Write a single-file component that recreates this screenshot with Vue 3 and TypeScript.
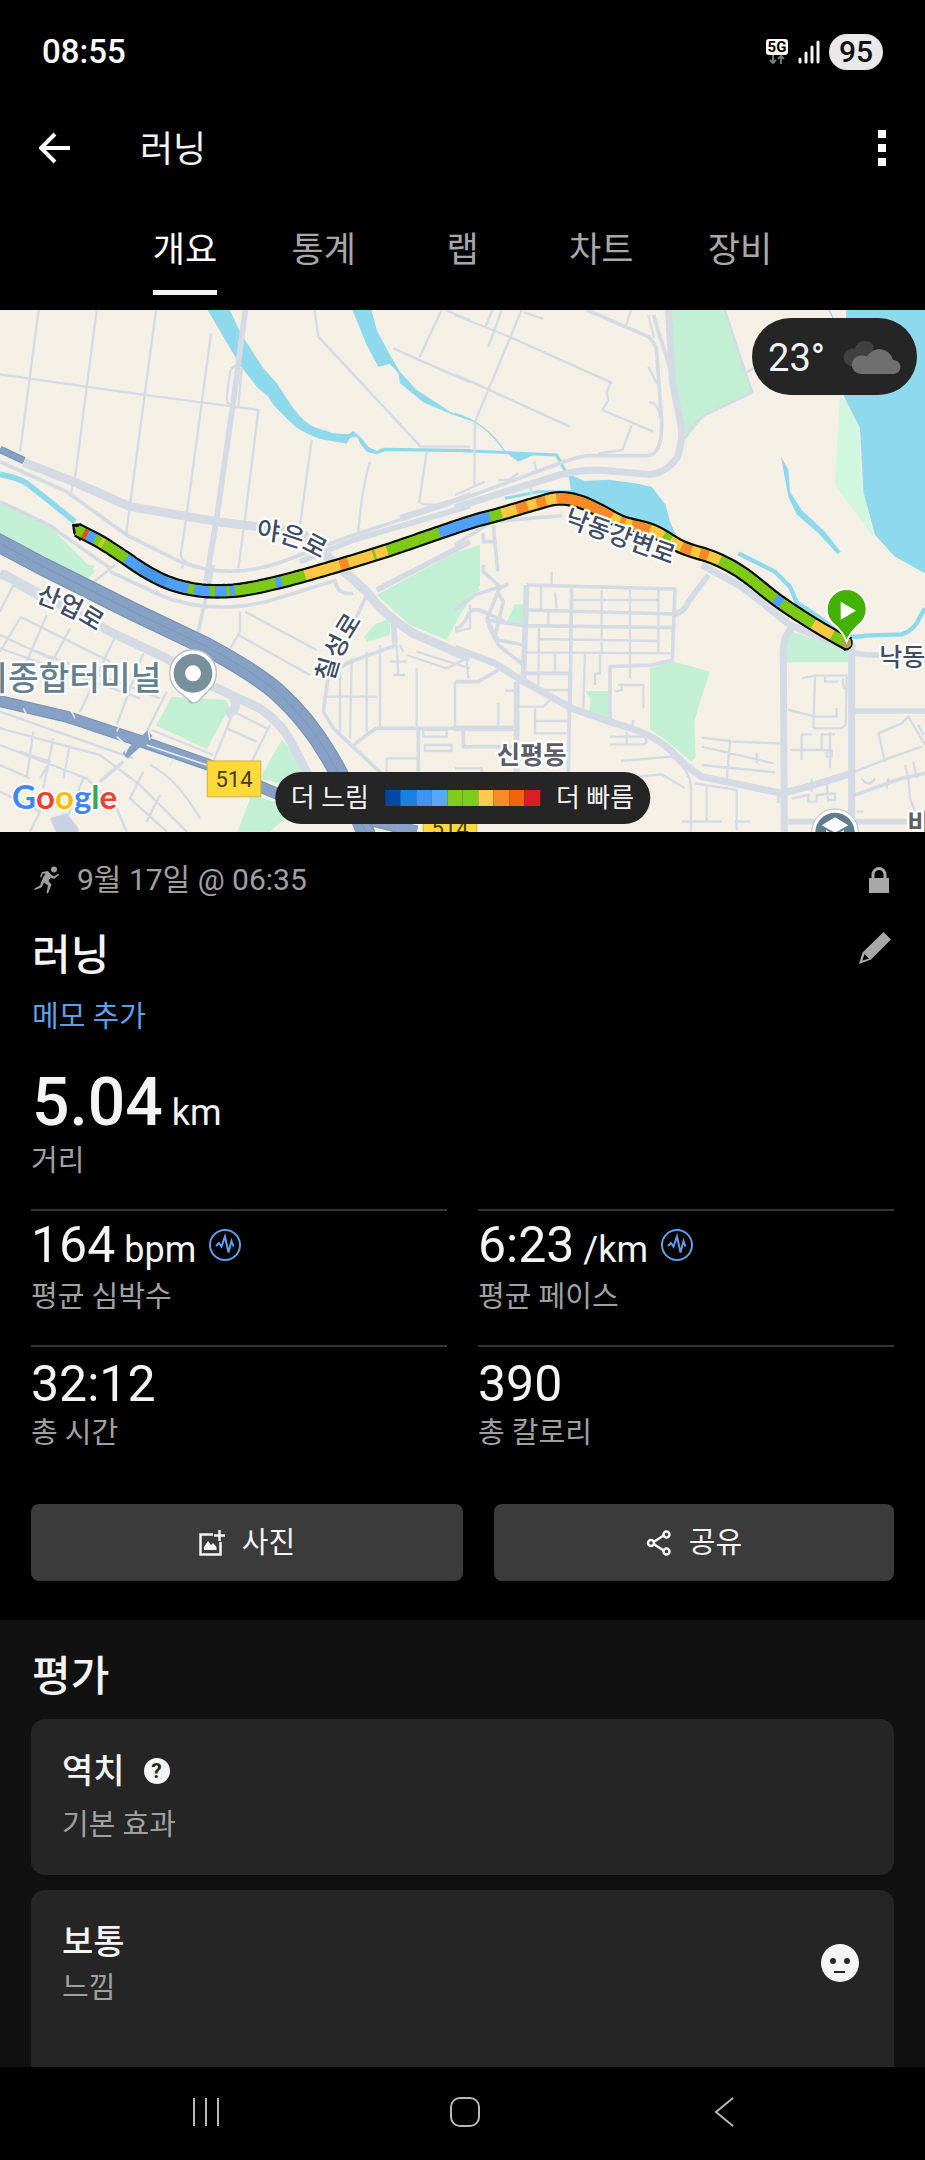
<script setup lang="ts">
import { ref } from 'vue'

interface Stat {
  value: string
  unit?: string
  label: string
  graph: boolean
}

const tabs: string[] = ['개요', '통계', '랩', '차트', '장비']
const activeTab = ref<string>('개요')

const stats: Stat[] = [
  { value: '164', unit: 'bpm', label: '평균 심박수', graph: true },
  { value: '6:23', unit: '/km', label: '평균 페이스', graph: true },
  { value: '32:12', label: '총 시간', graph: false },
  { value: '390', label: '총 칼로리', graph: false },
]

const paceScale: string[] = [
  '#0047a3', '#1d7fe0', '#3f93f2', '#57a6ff', '#80cb1c',
  '#80cb1c', '#ffcb4d', '#fc8a28', '#f0650c', '#d91f25',
]

/* Route: points in map units, always running west to east. */
const points: [number, number][] = [
  [232, 660], [300, 695], [370, 740], [430, 780], [490, 812], [550, 832], [620, 843],
  [720, 840], [850, 813], [1000, 771], [1160, 722], [1410, 637], [1505, 611], [1600, 583],
  [1675, 565], [1740, 575], [1800, 602], [1865, 636], [1960, 663], [2045, 711], [2145, 745],
  [2225, 788], [2335, 873], [2445, 945], [2545, 1002],
]

function yAt(x: number): number {
  let i = 0
  while (i < points.length - 2 && x > points[i + 1][0]) i++
  const [x1, y1] = points[i]
  const [x2, y2] = points[i + 1]
  const before = points[Math.max(i - 1, 0)]
  const after = points[Math.min(i + 2, points.length - 1)]
  const m1 = (y2 - before[1]) / (x2 - before[0])
  const m2 = (after[1] - y1) / (after[0] - x1)
  const w = x2 - x1
  const t = (x - x1) / w
  const t2 = t * t
  const t3 = t2 * t
  return (2 * t3 - 3 * t2 + 1) * y1 + (t3 - 2 * t2 + t) * w * m1
    + (3 * t2 - 2 * t3) * y2 + (t3 - t2) * w * m2
}

function slice(from: number, to: number): string {
  const steps = Math.max(1, Math.ceil((to - from) / 12))
  const out: string[] = []
  for (let i = 0; i <= steps; i++) {
    const x = from + ((to - from) * i) / steps
    out.push(`${x.toFixed(1)},${yAt(x).toFixed(1)}`)
  }
  return out.join(' ')
}

const G = '#7cc916'
const B = '#4f9ffc'
const Y = '#fdc645'
const O = '#fa8a29'
const R = '#e05518'

/* Each entry: where the colour ends, and the colour. */
const pace: [number, string][] = [
  [250, G], [262, R], [286, B], [300, G], [311, '#c9cc30'], [378, G], [420, B], [500, '#4596ee'],
  [565, B], [582, G], [630, B], [645, G], [680, B], [690, G], [705, B], [828, G], [846, B],
  [915, G], [1020, Y], [1045, O], [1120, Y], [1127, G], [1162, Y], [1318, G], [1470, B],
  [1505, G], [1550, Y], [1583, O], [1610, Y], [1638, O], [1670, Y], [1835, O], [1860, Y],
  [1875, O], [1895, Y], [1950, O], [1990, Y], [2010, G], [2045, Y], [2075, O], [2100, Y],
  [2125, O], [2160, Y], [2325, G], [2345, B], [2440, G], [2497, Y], [2530, G], [2545, '#b9a05a'],
]
const segments = pace.map(([end, color], i) => ({
  color,
  line: slice(i === 0 ? 232 : pace[i - 1][0], end),
}))
const outline = slice(232, 2545)
</script>

<template>
  <div class="screen">
    <header>
      <div class="status">
        <time>08:55</time>
        <div class="status-icons">
          <svg class="net" viewBox="0 0 24 28" aria-hidden="true">
            <rect x="1" y="1" width="22" height="16" rx="3" fill="#fff" />
            <text x="12" y="14" text-anchor="middle" class="net-text">5G</text>
            <path d="M8 17v8M5 22l3 3 3-3M16 26v-8M13 21l3-3 3 3" fill="none" stroke="#777" stroke-width="2" />
          </svg>
          <svg class="signal" viewBox="0 0 22 24" aria-hidden="true">
            <path d="M2 19v3M8 13v9M14 7v15M20 2v20" fill="none" stroke="#f4f4f4" stroke-width="3" stroke-linecap="round" />
          </svg>
          <span class="battery">95</span>
        </div>
      </div>
      <div class="appbar">
        <button type="button" class="icon-btn" aria-label="뒤로">
          <svg width="32" height="32" viewBox="0 0 32 32"><path d="M31 16H3M16 2L2 16l14 14" fill="none" stroke="#fff" stroke-width="4" /></svg>
        </button>
        <h1>러닝</h1>
        <button type="button" class="icon-btn more" aria-label="더보기">
          <svg width="8" height="36" viewBox="0 0 8 36"><path d="M0 0h8v8H0zM0 14h8v8H0zM0 28h8v8H0z" fill="#fff" /></svg>
        </button>
      </div>
      <nav class="tabs">
        <button
          v-for="tab in tabs"
          :key="tab"
          type="button"
          :class="{ active: tab === activeTab }"
          @click="activeTab = tab"
        ><span>{{ tab }}</span></button>
      </nav>
    </header>

    <section class="map">
      <svg class="map-art" viewBox="0 0 2775 1566" preserveAspectRatio="xMidYMid slice" role="img" aria-label="러닝 경로 지도">
        <defs>
          <path id="label-yaeun" d="M768 686Q880 690 985 762" />
          <path id="label-saneop" d="M105 875Q200 905 305 975" />
          <path id="label-chilseong" d="M1000 1118Q1012 1040 1092 922" />
        </defs>

        <g class="park">
          <path d="M0 580L150 650L285 785L240 825L0 690z" />
          <path transform="translate(0 765)" d="M140 0L285 0L262 40zM1130 90L1370 -40L1440 -60V60L1380 150L1340 225L1230 180zM1092 215L1125 178L1170 160V210L1100 232zM515 395L680 405L687 430L620 552L468 482zM780 640L845 525L935 625V680zM712 800L755 690L890 730L810 800z" />
          <path transform="translate(1365 -15)" d="M650 0H805L893 262L750 330L690 405L665 310z" />
          <path transform="translate(1365 765)" d="M0 0H60L55 45L75 75L30 105L0 175zM585 310L650 288L765 320L738 400L718 470L722 575L710 590L650 540L585 492zM390 378H460V460L403 440L407 400zM995 195L1180 255V292H995zM150 180L180 118H212V178z" />
          <path class="meadow" transform="translate(1365 -15)" d="M1155 270L1180 300L1212 370L1218 520L1255 695L1140 540z" />
        </g>

        <g class="water">
          <path transform="translate(0 -15)" d="M620 10H688Q715 75 735 105L790 190L830 235L880 310Q915 355 940 365L1000 385L1045 388L1060 378L1085 400L1105 425L1130 438L1150 428L1410 432V442L1155 438L1130 448L1100 440L1080 415L1072 395L1050 398L1040 416L960 402Q900 380 870 350L820 300L805 275L770 245L720 180zM1055 10H1113L1130 75L1170 150L1200 200L1250 255L1320 300L1350 320L1410 342V347L1345 324L1270 292L1200 235L1195 205L1170 177L1135 185L1100 120z" />
          <path transform="translate(1365 -15)" d="M1175 0H1410V805L1320 755L1260 690L1225 560L1215 370L1160 260zM978 455L1000 495L1005 560L1040 615L1110 680L1157 740L1148 748L1090 685L1025 628L1000 575L988 510zM340 508L390 528L460 524L540 535L590 545L632 600L645 650L665 695L740 730L500 640L420 590L350 570zM150 440L190 470L240 448z" />
          <g class="stream">
            <path d="M0 493Q60 505 80 520T225 635" stroke-width="17" />
            <path transform="translate(1365 -15)" d="M0 436L305 450L340 515M150 580L250 560L350 560" stroke-width="9" />
            <path transform="translate(1365 -15)" d="M0 325Q90 350 150 440M1120 10L1145 60" stroke-width="4" />
            <path transform="translate(1365 765)" d="M850 -35L960 20L1005 65L1025 112L1100 162L1150 202Q1190 222 1230 212L1340 208Q1380 195 1395 155L1410 130" stroke-width="13" />
          </g>
        </g>

        <g class="roads">
          <g transform="translate(0 -15)">
            <path class="r8" d="M118 0L60 440M292 0L225 520M470 0L390 600L378 690M633 85L560 630L542 750Q545 775 600 785M0 208L400 265L775 315L735 640L715 790M700 300Q680 300 680 280L690 200Q695 185 710 182M725 190L715 305M935 405L900 660M1110 470Q1085 550 1075 680M1280 440L1258 590Q1260 602 1340 598M942 0L955 95L1262 425H1410M1325 15L1258 158M1180 130L1410 232M1335 15L1410 45M220 530L210 575" />
            <path class="r12" d="M0 470L200 560L380 690L540 770Q690 830 860 765L1060 690L1340 600L1410 565M1200 635L1410 570M0 590L150 662L330 790" />
            <path class="r18" d="M738 0L700 290L650 640L618 830M900 770L1060 705L1410 602" />
            <path class="r26" d="M72 472L220 530L390 605L650 650L780 666L900 680L1000 770L1100 860" />
          </g>
          <g transform="translate(1365 -15)">
            <path class="r8" d="M200 15L60 350L58 540M0 30L150 90L468 232L455 262L460 285L442 315L595 380M0 208L345 365M530 360L502 435L430 445M112 15L92 65M140 15L100 125M208 22L265 42M528 15L512 65M580 30L598 100M580 185L605 235M582 292Q610 290 615 340M805 0L872 205L893 262L750 330Q710 360 690 400M238 470L243 495M225 530L230 570M0 570L90 530M130 525H160L190 505M1000 130L870 205" />
            <path class="r12" d="M395 15L580 95Q605 120 605 140L620 350Q622 452 575 452H400Q370 455 300 480L0 590M595 30L645 190M0 720L110 650L320 632M85 685V710H120M115 660L128 800" />
            <path class="r22" d="M640 0L652 230L672 330Q690 400 665 460Q625 510 580 508L430 495Q350 495 280 520L0 608" />
          </g>
          <g transform="translate(0 765)">
            <path class="r8" d="M0 210L160 285M0 140L40 60M0 250L420 400M60 160L0 260M140 150L80 290M210 190L130 340M345 215L240 440M430 265L350 480M40 60L130 110M60 155L330 290M60 240L480 400M500 380L440 500M270 60L345 0M550 0L545 10M720 140V200L680 270M735 140L950 255M715 210L930 330M700 440L800 490M680 490L770 530M810 480L740 620M700 440L640 590M455 495L640 570M445 520L620 590M0 490L300 570L420 660L560 800M0 440L400 580M0 540L260 640L350 730L380 800M60 560L150 590L120 640M100 500L80 640M160 520L130 670M210 540L190 640M0 600L90 640M0 680L120 740L90 800M250 640L200 760M430 620L390 700L500 800M450 600Q530 640 600 760M480 690L440 770M1140 240V490M1100 260V500M1055 280L1050 520M1020 300V500M980 395H1130M1250 310V490M1365 350V490M1190 240L1195 330M1170 290H1220M1180 330H1215M1220 270L1340 310L1400 280M1410 310L1250 260M1270 495H1340V515H1270zM1275 540H1355V558H1275zM1160 620V580H1260M1200 240L1210 260M1365 200L1410 190V120" />
            <path class="r12" d="M330 20L480 90Q620 150 800 110L1010 45M640 0L590 220M1190 240L1050 290L985 330L970 440L1000 490L1160 640M1130 490H1410M1060 540L1130 488M1255 490V620M1005 45Q1010 90 1060 85M300 650L370 590M1100 90L1040 220M860 740H920" />
            <path class="r18" d="M1180 160L1185 235M1130 75L1410 -70M10 20L120 85" />
            <path class="r26" d="M0 25L130 90L340 205L500 280L640 365L780 430Q850 480 875 535L930 640M1010 0L1100 80Q1150 150 1240 205L1410 280M700 400Q720 430 680 450" />
            <path class="hub" d="M150 760L200 745L235 790V805H170z" />
          </g>
          <g transform="translate(1365 765)">
            <path class="r8" d="M258 60V135M300 82L305 130M352 105H610M255 222L610 228M252 185L250 368M300 265V325M390 265L385 430M435 265V325H420V360M440 75V265M525 75V340M610 70V265M280 140V178M205 262L655 265M240 375H340M190 425H265L290 400M240 430V505H340M240 468H340M130 415V480M150 377H175M490 360H565V430M500 355V375L480 380M465 515H570L575 530Q570 540 550 538H465M535 465L530 490M515 500V535M498 588L650 575Q700 610 708 660V800M550 635L620 628L690 670M680 770H800M840 770H885M720 655L845 675V795M755 660V770M740 518L825 528L815 645M740 545L955 595M740 600L960 622M830 530L975 535M905 565V595M1040 340L1080 332H1175L1172 480L1160 490H1075M1080 335L1075 490M1110 335V350H1150M1165 340Q1160 370 1178 372M1000 435L1080 455H1145V430M1005 555H1130V575H1115V555M1040 585V508H1070M1100 555V508H1140M1125 500V610M1010 700L1060 690V710H1085V690L1140 685V705H1120M1070 640V680M1115 655L1120 710M1270 505L1340 475L1360 455L1410 540M1270 505L1290 590M1200 620L1300 580L1400 545M1220 640Q1240 670 1260 640M1300 640L1295 670M1350 600L1360 640M1375 590L1385 640M1360 640L1365 700L1380 740M1390 480L1405 510M1205 740H1225M970 690V715M290 20V60M0 610H80V625M35 290L40 340" />
            <path class="r12" d="M215 60L660 72L652 285L590 300L465 305V470M350 70L345 430M215 135L658 147M95 165L205 182L658 188M205 325H345L340 640M0 350H70L130 315M95 165L135 65L85 20V0M135 70L160 55M0 190Q20 190 40 150Q50 120 95 145L150 170M95 165L130 225L205 240M100 180L130 240L205 300M130 85L145 110L120 215M0 135L60 90L135 65M25 490V545H180M1200 690L1340 640L1410 625" />
            <path class="r18" d="M0 490H175M215 60L205 350M185 350V620M655 150Q690 140 700 110L760 30M1200 265L1240 270H1410M1200 438H1410M1000 770H1410" />
            <path class="r22" d="M0 250L120 295L190 340L350 430L480 475Q610 510 660 570Q700 610 740 635L980 685L1060 665L1190 625M1010 190Q985 210 985 260L988 800M1190 235V760M740 0L860 65L1005 180L1190 255" />
          </g>
        </g>

        <g class="highway">
          <path class="edge" d="M0 418L72 452" stroke-width="22" />
          <path d="M0 418L72 452" stroke-width="16" />
          <g transform="translate(0 765)">
            <path class="edge" d="M-20 404L200 455L420 528L620 597L840 690L930 720L1250 800" stroke-width="36" />
            <path d="M-20 404L200 455L420 528L620 597L840 690L930 720L1250 800" stroke-width="30" />
            <path d="M375 572L450 505" stroke-width="22" />
            <path class="lane" d="M350 515L385 545L375 565M440 540L620 600M445 500L450 525M70 430L80 450M215 440L225 460M165 485L175 470M350 500L360 480M510 605L520 580" />
            <path class="edge" d="M-20 -75L130 5L400 140L620 245Q760 320 830 380Q920 460 985 570Q1040 660 1100 810" stroke-width="56" />
            <path d="M-20 -75L130 5L400 140L620 245Q760 320 830 380Q920 460 985 570Q1040 660 1100 810" stroke-width="50" />
            <path class="seam" d="M-20 -75L130 5L400 140L620 245Q760 320 830 380Q920 460 985 570Q1040 660 1100 810" />
          </g>
        </g>

        <g class="route">
          <polyline :points="outline" stroke="#0b0d0b" stroke-width="44" />
          <path d="M242 642L218 644L222 670L240 690zM2535 976A22 22 0 1 1 2534 1020z" fill="#0b0d0b" stroke="#0b0d0b" stroke-width="4" stroke-linejoin="round" />
          <polyline :points="outline" :stroke="G" stroke-width="30" />
          <path d="M240 650L224 651L227 666L240 678z" :fill="G" />
          <path d="M2540 985A15 15 0 1 1 2538 1015z" fill="#b9a05a" />
          <polyline v-for="(s, i) in segments" :key="i" :points="s.line" :stroke="s.color" stroke-width="30" />
        </g>

        <g class="labels">
          <text class="road"><textPath href="#label-yaeun">야은로</textPath></text>
          <text class="road"><textPath href="#label-saneop">산업로</textPath></text>
          <text class="road"><textPath href="#label-chilseong">칠성로</textPath></text>
          <text class="road" transform="translate(1690 645) rotate(20)">낙동강변로</text>
          <text class="road" x="2638" y="1067">낙동강변로</text>
          <text class="place" x="1490" y="1362">신평동</text>
          <text class="place" x="2722" y="1565">비산동</text>
          <text class="poi" x="484" y="1141" text-anchor="end">구미종합터미널</text>
        </g>

        <g class="shield">
          <rect x="622" y="1353" width="160" height="107" />
          <text x="702" y="1430" text-anchor="middle">514</text>
          <rect x="1270" y="1500" width="160" height="107" />
          <text x="1350" y="1577" text-anchor="middle">514</text>
        </g>

        <g>
          <path d="M579 1180L533 1142A70 70 0 1 1 625 1142L594 1174Q579 1186 564 1174z" fill="#fff" stroke="#b6bec4" stroke-width="4" />
          <circle cx="579" cy="1090" r="58" fill="#78909c" />
          <circle cx="579" cy="1090" r="24" fill="#fff" />
        </g>
        <g>
          <circle cx="2505" cy="1567" r="70" fill="#fff" stroke="#b6bec4" stroke-width="3" />
          <circle cx="2505" cy="1567" r="59" fill="#607d8b" />
          <path d="M2465 1546L2505 1522L2545 1546L2505 1568zM2478 1560L2505 1575L2532 1560V1580H2478z" fill="#fff" />
        </g>
        <g>
          <path d="M2540 995Q2530 968 2498 940A60 60 0 1 1 2582 940Q2550 968 2540 995z" fill="#43b104" stroke="#fff" stroke-width="6" />
          <path d="M2522 875L2568 902L2522 929z" fill="#fff" />
        </g>

        <text class="google" x="36" y="1496"><tspan fill="#4285f4">G</tspan><tspan fill="#ea4335">o</tspan><tspan fill="#fbbc05">o</tspan><tspan fill="#4285f4">g</tspan><tspan fill="#34a853">l</tspan><tspan fill="#ea4335">e</tspan></text>
      </svg>

      <div class="weather">
        <span>23°</span>
        <svg width="60" height="34" viewBox="0 0 60 34" aria-hidden="true">
          <path d="M9 25A9 9 0 0 1 10 7.500Q12 7 14 8A10 10 0 0 1 33 6L24 28z" fill="#404040" />
          <path d="M20 33A9 9 0 0 1 20 14.500Q23 14 26 15.500A14 14 0 0 1 52 19A7 7 0 0 1 53 33z" fill="#6f6f6f" />
        </svg>
      </div>
      <div class="legend">
        <span>더 느림</span>
        <span class="scale"><i v-for="(c, i) in paceScale" :key="i" :style="{ background: c }"></i></span>
        <span>더 빠름</span>
      </div>
    </section>

    <section class="summary">
      <div class="date">
        <svg width="26" height="28" viewBox="0 0 26 28" aria-hidden="true">
          <circle cx="20" cy="3.500" r="3" fill="#a0a0a0" />
          <path d="M6 11L8 6L14 5L17 8.500L20 10.500L24.500 7.500L25 9L20 13L16.500 11.500L14.500 15L17.500 18.500L14 27.500L12.500 27L14 19.500L10 16.500L7.500 21.500L0.500 24V22.500L6 19.500L9 11.500L11.500 7.500L9 7.500L7 11.500z" fill="#a0a0a0" />
        </svg>
        <span>9월 17일 @ 06:35</span>
        <svg class="lock" width="20" height="26" viewBox="0 0 20 26" role="img" aria-label="비공개">
          <path d="M4 12V7.500A6 6 0 0 1 16 7.500V12" fill="none" stroke="#a8a8a8" stroke-width="3" />
          <path d="M0 11h20v15H0z" fill="#a8a8a8" />
        </svg>
      </div>
      <div class="name">
        <h2>러닝</h2>
        <button type="button" class="edit" aria-label="이름 편집">
          <svg width="32" height="32" viewBox="0 0 32 32"><path fill-rule="evenodd" d="M24.500 0L32 7.500L12 27.500L0 32L3.500 20.500zM5.500 22L3.500 28.500L10 26.500z" fill="#a8a8a8" /></svg>
        </button>
      </div>
      <a href="#memo" class="memo">메모 추가</a>
      <div class="distance"><strong>5.04</strong> <span class="unit">km</span></div>
      <div class="label">거리</div>

      <div class="stats">
        <div v-for="s in stats" :key="s.label" class="stat">
          <div class="value">
            <span>{{ s.value }}<span v-if="s.unit" class="unit">{{ ' ' + s.unit }}</span></span>
            <svg v-if="s.graph" width="34" height="34" viewBox="0 0 34 34" aria-hidden="true">
              <circle cx="17" cy="17" r="15" fill="none" stroke="#5ca0ec" stroke-width="2" />
              <path d="M8 18L11 15L13.500 18.500L17 8.500L20.500 24.500L23.500 13L25.500 18.500" fill="none" stroke="#5ca0ec" stroke-width="2" />
            </svg>
          </div>
          <div class="label">{{ s.label }}</div>
        </div>
      </div>

      <div class="actions">
        <button type="button" class="photo">
          <svg width="26" height="26" viewBox="0 0 26 26" aria-hidden="true">
            <path d="M14 4.500H1.500V24.500H21.500V12M20.500 0V11M15 5.500H26" fill="none" stroke="#f4f4f4" stroke-width="2.500" />
            <path d="M5 20V17L9 11L12 15L14 13L17.500 17V20z" fill="#f4f4f4" />
          </svg>
          사진
        </button>
        <button type="button" class="share">
          <svg width="26" height="26" viewBox="0 0 26 26" aria-hidden="true">
            <path d="M6 13L20 4M6 13L20 22" stroke="#f4f4f4" stroke-width="2.500" />
            <g fill="#3b3b3b" stroke="#f4f4f4" stroke-width="2.500"><circle cx="5" cy="13" r="3" /><circle cx="20.500" cy="4.500" r="3" /><circle cx="20.500" cy="21.500" r="3" /></g>
          </svg>
          공유
        </button>
      </div>
    </section>

    <section class="rating">
      <h2>평가</h2>
      <article class="card">
        <div>
          <h3>
            역치
            <button type="button" class="help" aria-label="도움말">?</button>
          </h3>
          <p class="effect">기본 효과</p>
        </div>
      </article>
      <article class="card last">
        <div>
          <h3>보통</h3>
          <p>느낌</p>
        </div>
        <svg width="38" height="38" viewBox="0 0 38 38" role="img" aria-label="보통">
          <circle cx="19" cy="19" r="19" fill="#f4f4f4" />
          <circle cx="12" cy="17" r="3" fill="#252525" />
          <circle cx="26" cy="17" r="3" fill="#252525" />
          <path d="M13 28H24" stroke="#252525" stroke-width="2" />
        </svg>
      </article>
    </section>

    <nav class="system">
      <button type="button" aria-label="최근 앱">
        <svg width="32" height="32" viewBox="0 0 32 32"><path d="M4 2v28M16 2v28M28 2v28" stroke="#b8b8b8" stroke-width="2" /></svg>
      </button>
      <button type="button" aria-label="홈">
        <svg width="32" height="32" viewBox="0 0 32 32"><rect x="2" y="2" width="28" height="28" rx="9" fill="none" stroke="#b8b8b8" stroke-width="2" /></svg>
      </button>
      <button type="button" aria-label="뒤로 가기">
        <svg width="32" height="32" viewBox="0 0 32 32"><path d="M25 2L8 16L25 30" fill="none" stroke="#b8b8b8" stroke-width="2" /></svg>
      </button>
    </nav>
  </div>
</template>

<style>
body {
  margin: 0;
  background: #000;
}
</style>

<style scoped>
.screen {
  display: flex;
  flex-direction: column;
  min-height: 100vh;
  background: #000;
  color: #f4f4f4;
  font-family: Roboto, "Noto Sans CJK KR", sans-serif;
  font-size: 29px;
}
button {
  border: 0;
  padding: 0;
  background: none;
  color: inherit;
  font: inherit;
  cursor: pointer;
}
svg {
  display: block;
}
h1, h2, h3, p {
  margin: 0;
  font-weight: 400;
}
.status {
  display: flex;
  align-items: center;
  justify-content: space-between;
  height: 103px;
  padding: 0 42px;
  color: #fff;
}
.status time {
  font-size: 33px;
  font-weight: 500;
}
.status-icons {
  display: flex;
  align-items: center;
  gap: 9px;
}
.net {
  width: 24px;
  height: 28px;
}
.net-text {
  font-size: 15px;
  font-weight: 700;
  fill: #000;
}
.signal {
  width: 22px;
  height: 24px;
}
.battery {
  width: 54px;
  border-radius: 18px;
  background: #e9e9e9;
  color: #111;
  font-size: 30px;
  font-weight: 500;
  line-height: 36px;
  text-align: center;
}
.appbar {
  display: flex;
  align-items: center;
  height: 90px;
  padding: 0 39px;
}
.appbar h1 {
  flex: 1;
  margin-left: 69px;
  padding-top: 4px;
  font-size: 36px;
  line-height: 40px;
}
.tabs {
  display: flex;
  justify-content: center;
  height: 117px;
}
.tabs button {
  width: 15%;
  height: 102px;
  color: #a8a8a8;
  font-size: 35px;
}
.tabs span {
  display: inline-block;
  box-sizing: border-box;
  height: 102px;
  padding-top: 12px;
  border-bottom: 5px solid transparent;
  line-height: 92px;
}
.tabs .active {
  color: #fff;
}
.tabs .active span {
  border-color: #f4f4f4;
}
.map {
  position: relative;
  overflow: hidden;
}
.map-art {
  width: 100%;
  height: auto;
  background: #f4f0e5;
}
.park {
  fill: #c3f0d5;
}
.meadow {
  fill: #d0f7df;
}
.water {
  fill: #8fd9ed;
}
.stream {
  fill: none;
  stroke: #8fd9ed;
}
.roads {
  fill: none;
  stroke: #d4dbe4;
  stroke-linejoin: round;
}
.r8 { stroke-width: 7; }
.r12 { stroke-width: 11; }
.r18 { stroke-width: 17; }
.r22 { stroke-width: 21; }
.r26 { stroke-width: 27; }
.hub {
  fill: #c8d2e2;
}
.highway {
  fill: none;
  stroke: #86a1c3;
}
.edge {
  stroke: #7690b3;
}
.lane {
  stroke: #e6ebf1;
  stroke-width: 5;
}
.seam {
  stroke: #8095b5;
  stroke-width: 3;
}
.route {
  fill: none;
}
.labels {
  font-family: "Noto Sans CJK KR", sans-serif;
  font-weight: 500;
  stroke: #fff;
  stroke-width: 14;
  stroke-linejoin: round;
  paint-order: stroke;
}
.road {
  font-size: 75px;
  fill: #404c63;
}
.place {
  font-size: 76px;
  font-weight: 700;
  fill: #5a5f68;
}
.poi {
  font-size: 100px;
  fill: #65808d;
}
.shield rect {
  fill: #ffd83a;
  stroke: #d8bd50;
  stroke-width: 4;
}
.shield text {
  font-size: 66px;
  fill: #4a3a12;
}
.google {
  font-family: Lato, sans-serif;
  font-size: 99px;
  font-weight: 700;
  stroke: #fff;
  stroke-width: 10;
  stroke-linejoin: round;
  paint-order: stroke;
}
.weather {
  position: absolute;
  top: 8px;
  right: 8px;
  display: flex;
  align-items: center;
  gap: 16px;
  box-sizing: border-box;
  height: 77px;
  padding: 2px 16px 0;
  border-radius: 39px;
  background: #252525;
  font-size: 38px;
}
.legend {
  position: absolute;
  bottom: 8px;
  left: 50%;
  display: flex;
  align-items: center;
  gap: 16px;
  padding: 0 16px;
  border-radius: 26px;
  background: #252525;
  font-size: 26px;
  line-height: 52px;
  white-space: nowrap;
  transform: translateX(-50%);
}
.scale {
  display: flex;
  width: 155px;
  height: 16px;
}
.scale i {
  flex: 1;
}
.summary {
  padding: 25px 31px 39px;
}
.date {
  display: flex;
  align-items: center;
  gap: 17px;
  height: 46px;
  padding: 0 5px 0 3px;
  color: #a0a0a0;
  font-size: 30px;
  line-height: 40px;
}
.lock {
  margin-left: auto;
}
.name {
  display: flex;
  justify-content: space-between;
  align-items: flex-start;
  margin-top: 23px;
  padding: 0 3px 0 1px;
}
h2 {
  font-size: 42px;
  font-weight: 500;
  line-height: 60px;
}
.edit {
  padding-top: 6px;
}
.memo {
  display: table;
  margin: 11px 0 0 1px;
  color: #5ca0ec;
  line-height: 40px;
  text-decoration: none;
}
.distance {
  height: 78px;
  margin: 26px 0 0 1px;
  font-size: 36px;
  line-height: 80px;
}
.distance strong {
  font-size: 66px;
  font-weight: 500;
}
.unit {
  font-size: 36px;
}
.label {
  color: #a0a0a0;
  line-height: 40px;
}
.stats {
  display: grid;
  grid-template-columns: 1fr 1fr;
  column-gap: 31px;
  margin-top: 28px;
}
.stat {
  box-sizing: border-box;
  height: 136px;
  padding-top: 7px;
  border-top: 2px solid #333;
}
.value {
  display: flex;
  align-items: center;
  gap: 12px;
  height: 59px;
  font-size: 50px;
  line-height: 60px;
}
.value svg {
  margin-bottom: 6px;
}
.actions {
  display: flex;
  gap: 31px;
  margin-top: 23px;
}
.actions button {
  display: flex;
  align-items: center;
  justify-content: center;
  gap: 17px;
  height: 77px;
  border-radius: 8px;
  background: #3b3b3b;
  line-height: 40px;
}
.photo {
  flex: 27;
}
.share {
  flex: 25;
}
.rating {
  flex: 1;
  padding: 27px 31px 0;
  background: #111;
}
.rating h2 {
  margin: 0 0 12px 1px;
}
.card {
  display: flex;
  align-items: center;
  justify-content: space-between;
  margin-bottom: 15px;
  padding: 28px 35px 30px 31px;
  border-radius: 14px;
  background: #252525;
}
.last {
  margin-bottom: 0;
  padding-bottom: 59px;
  border-radius: 14px 14px 0 0;
}
h3 {
  display: flex;
  align-items: center;
  gap: 19px;
  font-size: 34px;
  font-weight: 500;
  line-height: 48px;
}
.card p {
  margin-top: 2px;
  color: #a0a0a0;
  line-height: 40px;
}
.card .effect {
  margin-top: 10px;
}
.help {
  width: 26px;
  height: 26px;
  border-radius: 50%;
  background: #f4f4f4;
  color: #252525;
  font-size: 21px;
  font-weight: 700;
  line-height: 26px;
}
.system {
  display: grid;
  grid-template-columns: 1fr 1fr 1fr;
  padding: 29px 72px 32px 77px;
  background: #000;
}
.system button {
  display: flex;
  justify-content: center;
}
</style>
